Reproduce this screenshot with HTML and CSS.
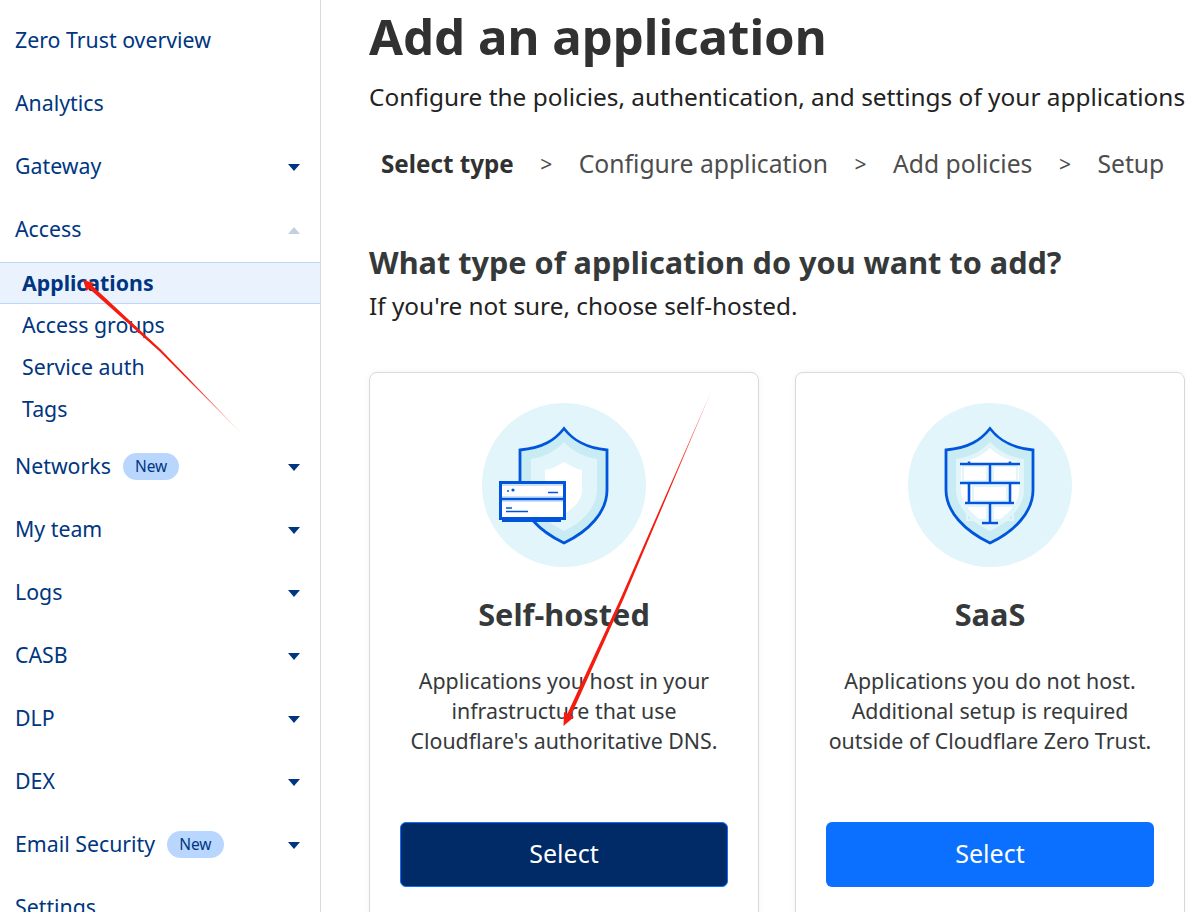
FILE: index.html
```html
<!DOCTYPE html>
<html lang="en">
<head>
<meta charset="utf-8">
<title>Add an application</title>
<link rel="stylesheet" href="styles.css">
</head>
<body>
<div class="page">
  <nav class="sidebar">
    <a class="nav-item">Zero Trust overview</a>
    <a class="nav-item">Analytics</a>
    <a class="nav-item">Gateway<span class="caret"></span></a>
    <a class="nav-item">Access<span class="caret up"></span></a>
    <div class="subnav">
      <a class="sub-item active">Applications</a>
      <a class="sub-item">Access groups</a>
      <a class="sub-item">Service auth</a>
      <a class="sub-item">Tags</a>
    </div>
    <a class="nav-item">Networks<span class="badge">New</span><span class="caret"></span></a>
    <a class="nav-item">My team<span class="caret"></span></a>
    <a class="nav-item">Logs<span class="caret"></span></a>
    <a class="nav-item">CASB<span class="caret"></span></a>
    <a class="nav-item">DLP<span class="caret"></span></a>
    <a class="nav-item">DEX<span class="caret"></span></a>
    <a class="nav-item">Email Security<span class="badge">New</span><span class="caret"></span></a>
    <a class="nav-item">Settings</a>
  </nav>
  <main class="main">
    <h1>Add an application</h1>
    <p class="lead">Configure the policies, authentication, and settings of your applications</p>
    <ol class="steps">
      <li class="current">Select type</li>
      <li class="sep">&gt;</li>
      <li>Configure application</li>
      <li class="sep">&gt;</li>
      <li>Add policies</li>
      <li class="sep">&gt;</li>
      <li>Setup</li>
    </ol>
    <h2>What type of application do you want to add?</h2>
    <p class="hint">If you're not sure, choose self-hosted.</p>
    <div class="cards">
      <section class="card">
        <svg class="illus" viewBox="0 0 166 166" width="166" height="166" aria-hidden="true">
          <circle cx="83" cy="83" r="82" fill="#e1f5fb"/>
          <path d="M83 26.500C92 38 104 46 126 48V88C126 110 108 129 83 141C58 129 39 110 39 88V48C62 46 74 38 83 26.500Z" fill="#c9ebf4" stroke="#0055dc" stroke-width="2.800"/>
          <path d="M83 40C92 49 102 55 116 57V88C116 105 102 120 83 129C64 120 50 105 50 88V57C64 55 74 49 83 40Z" fill="#e1f5fb"/>
          <path d="M83 60C90 64 96 67 101 68V88C101 98 93 106 83 112C73 106 64 98 64 88V68C70 67 76 64 83 60Z" fill="#fff"/>
          <rect x="19.500" y="80.500" width="64" height="36" fill="#fff" stroke="#0055dc" stroke-width="3"/>
          <path d="M18 97H85" stroke="#0055dc" stroke-width="2.500"/>
          <path d="M21 83H82M21 95H82M21 99H82" stroke="#7fb0ee" stroke-width="0.800"/>
          <rect x="21" y="117" width="59" height="3" fill="#0055dc"/>
          <circle cx="27" cy="89" r="1" fill="#0055dc"/>
          <circle cx="32" cy="88" r="1.600" fill="#0055dc"/>
          <path d="M67 90.500H77M25 106H31M25 109.500H47" stroke="#0055dc" stroke-width="1.400"/>
        </svg>
        <h3>Self-hosted</h3>
        <p class="desc">Applications you host in your infrastructure that use Cloudflare's authoritative DNS.</p>
        <button class="btn pressed">Select</button>
      </section>
      <section class="card">
        <svg class="illus" viewBox="0 0 166 166" width="166" height="166" aria-hidden="true">
          <circle cx="83" cy="83" r="82" fill="#e1f5fb"/>
          <path d="M83 26.500C92 38 104 46 126 48V88C126 110 108 129 83 141C58 129 39 110 39 88V48C62 46 74 38 83 26.500Z" fill="#c9ebf4" stroke="#0055dc" stroke-width="2.800"/>
          <path d="M83 40C92 49 102 55 117 57V88C117 105 102 120 83 129C64 120 49 105 49 88V57C64 55 74 49 83 40Z" fill="#e1f5fb"/>
          <path d="M83 46C90 53 100 58 112 60V88C112 102 99 115 83 124C67 115 54 102 54 88V60C66 58 76 53 83 46Z" fill="#fff"/>
          <path d="M56 64H80V79H56ZM86 64H110V79H86ZM66 84H100V99H66ZM60 104H80V118H60ZM86 104H106V118H86Z" fill="none" stroke="#e1f5fb" stroke-width="2"/>
          <path d="M53 62H113M53 81H113M58 101H107M83 62V81M62 81V101M103 81V101M83 101V121M75 121H91M62 59.500V62M103 59.500V62" fill="none" stroke="#0055dc" stroke-width="2.600"/>
        </svg>
        <h3>SaaS</h3>
        <p class="desc">Applications you do not host. Additional setup is required outside of Cloudflare Zero Trust.</p>
        <button class="btn">Select</button>
      </section>
    </div>
  </main>
  <svg class="annot" viewBox="0 0 1186 912" width="1186" height="912" aria-hidden="true">
    <defs>
      <linearGradient id="fade1" gradientUnits="userSpaceOnUse" x1="85" y1="280" x2="243" y2="435">
        <stop offset="0" stop-color="#f41c10"/>
        <stop offset="0.65" stop-color="#f41c10"/>
        <stop offset="1" stop-color="#f41c10" stop-opacity="0.2"/>
      </linearGradient>
      <linearGradient id="fade2" gradientUnits="userSpaceOnUse" x1="563" y1="725" x2="710" y2="395">
        <stop offset="0" stop-color="#f41c10"/>
        <stop offset="0.7" stop-color="#f41c10"/>
        <stop offset="1" stop-color="#f41c10" stop-opacity="0.6"/>
      </linearGradient>
    </defs>
    <path d="M83 280L94 283L92 285.500L160.800 349.400L244 436L159.200 351L89 288.500L86.500 291Z" fill="url(#fade1)"/>
    <path d="M563.500 726L564 712L567.500 713.500L621 597.500L711 392L623.500 599L571 715.500L574 717Z" fill="url(#fade2)"/>
  </svg>
</div>
</body>
</html>
```
FILE: styles.css
```css
* { box-sizing: border-box; }
html, body { margin: 0; height: 100%; overflow: hidden; background: #fff; }
body { font-family: "Noto Sans", "Open Sans", sans-serif; color: #36393a; }
.page { position: relative; display: flex; width: 1186px; height: 912px; overflow: hidden; }

.sidebar { flex: 0 0 321px; height: 912px; border-right: 1px solid #d9d9d9; padding-top: 9px; color: #003681; overflow: hidden; }
.nav-item { display: flex; align-items: center; height: 63px; padding: 0 20px 2px 15px; font-size: 21.3px; }
.caret { margin-left: auto; margin-top: 4px; width: 0; height: 0; border-left: 6.5px solid transparent; border-right: 6.5px solid transparent; border-top: 7px solid #003681; }
.caret.up { border-top: 0; border-bottom: 7px solid #c4d0de; }
.badge { margin-left: 12px; padding: 0 12px; height: 27px; line-height: 27px; border-radius: 14px; background: #b9d6ff; font-size: 15.5px; margin-top: 2px; }
.subnav { margin-top: 1px; margin-bottom: 5px; }
.sub-item { display: flex; align-items: center; height: 42px; padding: 0 0 2px 22px; font-size: 21.3px; }
.sub-item.active { background: #eaf2fe; border-top: 1px solid #b9d6ff; border-bottom: 1px solid #b9d6ff; font-weight: 700; }

.main { flex: 1; min-width: 0; padding: 0 0 0 48px; overflow: hidden; }
h1 { margin: 4px 0 0; font-size: 49.2px; line-height: 64px; font-weight: 700; color: #313131; white-space: nowrap; }
.lead { margin: 11px 0 0; font-size: 24.4px; line-height: 36px; color: #222; white-space: nowrap; }
.steps { display: flex; list-style: none; margin: 31px 0 0; padding: 0 0 0 12px; font-size: 24.7px; line-height: 36px; color: #4d4d4d; white-space: nowrap; }
.steps .current { font-weight: 700; font-size: 24.2px; color: #313131; }
.steps .sep { margin: 0 26.5px; font-size: 21px; }
h2 { margin: 59px 0 0; font-size: 30.65px; line-height: 42px; font-weight: 700; color: #36393a; white-space: nowrap; }
.hint { margin: 5px 0 0; font-size: 24.35px; line-height: 36px; color: #222; white-space: nowrap; }

.cards { display: flex; gap: 36px; margin-top: 48px; }
.card { flex: 0 0 390px; height: 560px; border: 1px solid #d9d9d9; border-radius: 8px; padding: 29px 30px 0; display: flex; flex-direction: column; align-items: center; text-align: center; box-shadow: 0 0 6px rgba(0, 0, 0, 0.05); }
.illus { display: block; flex: none; }
h3 { margin: 25px 0 0; font-size: 30.7px; line-height: 42px; font-weight: 700; color: #36393a; }
.desc { margin: 31px 0 0; height: 156px; width: 324px; font-size: 21.35px; line-height: 30px; color: #36393a; }
.btn { flex: none; width: 328px; height: 65px; border: 0; border-radius: 6px; padding: 0 0 4px; background: #0b70ff; color: #fff; font: inherit; font-size: 25px; }
.btn.pressed { background: #002b67; border: 1px solid #0b70ff; }

.annot { position: absolute; inset: 0; pointer-events: none; }
```
